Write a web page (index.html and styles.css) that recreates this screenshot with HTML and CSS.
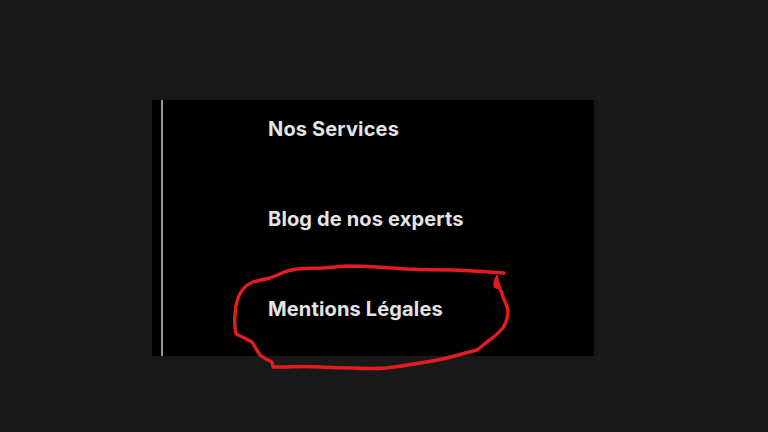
FILE: index.html
```html
<!doctype html>
<html lang="fr">
  <head>
    <title>Menu</title>
    <link rel="stylesheet" href="styles.css">
  </head>
  <body>
    <div class="panel">
      <ul class="menu">
        <li class="menu-item">Nos Services</li>
        <li class="menu-item">Blog de nos experts</li>
        <li class="menu-item">Mentions Légales</li>
      </ul>
    </div>
    <!-- red pen scribble drawn over the screenshot -->
    <svg class="scribble" viewBox="0 0 768 432" aria-hidden="true">
      <path class="scribble-line" d="M504 273 Q480 271 453 270 Q430 270 407 269 Q392 268 377 267 Q362 266 347 266 Q335 267 323 268 Q310 268 297 269 Q289 270 282 273 Q276 276 270 278 Q261 280 253 282 Q248 284 245 287 Q240 292 238 298 Q235 306 235 315 Q234 325 236 334 Q245 338 252 342 Q256 349 260 355 Q265 359 272 362 L273 367 Q280 367 287 367 Q303 366 320 367 Q336 368 353 368 Q370 369 387 368 Q403 366 420 363 Q434 361 447 358 Q462 354 477 350 Q482 346 487 342 Q496 336 503 328 Q508 320 508 310 Q506 303 503 297 Q502 292 499 287"/>
      <path class="scribble-mark" d="M497 275 Q493 280 494 287 Q497 290 501 288 Q499 282 497 275 Z"/>
    </svg>
  </body>
</html>
```

FILE: styles.css
```css
html, body {
  margin: 0;
  height: 100%;
}
body {
  background-color: #181818;
  padding: 100px 0 0 152px;
  box-sizing: border-box;
  overflow: hidden;
}
.panel {
  width: 442px;
  height: 256px;
  background-color: #000;
  padding-left: 9px;
  box-sizing: border-box;
}
.menu {
  list-style-type: none;
  margin: 0;
  height: 100%;
  padding: 17px 0 0 105px;
  box-sizing: border-box;
  border-left: 2px solid #999;
  display: flex;
  flex-direction: column;
  gap: 66px;
}
.menu-item {
  font-family: "Inter", sans-serif;
  font-size: 20px;
  font-weight: 700;
  letter-spacing: 0.15px;
  line-height: 24px;
  color: #e4e4e4;
}
.scribble {
  position: absolute;
  left: 0;
  top: 0;
  width: 768px;
  height: 432px;
}
.scribble-line {
  fill: none;
  stroke: #e41c22;
  stroke-width: 3.4;
  stroke-linecap: round;
  stroke-linejoin: round;
}
.scribble-mark {
  fill: #e41c22;
  stroke: #e41c22;
  stroke-width: 1;
}
```
